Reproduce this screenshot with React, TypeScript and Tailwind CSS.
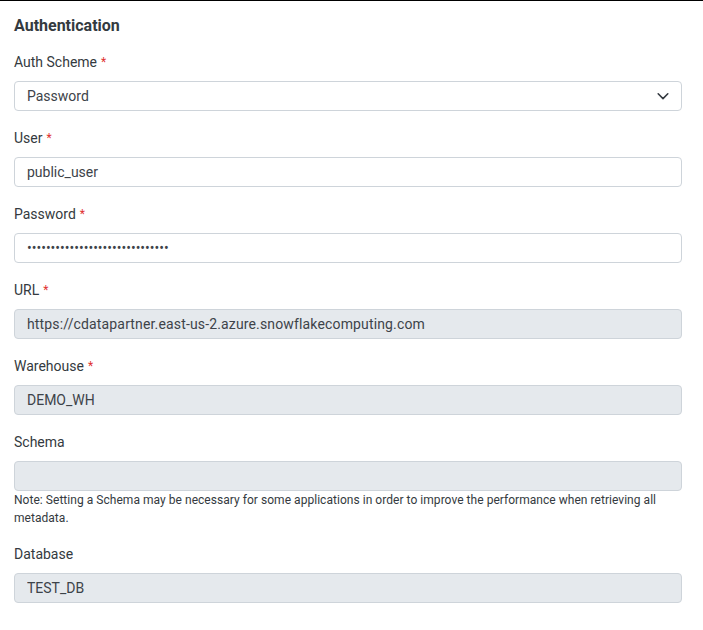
import React from "react";

const Req = () => <span className="text-[#e03131] text-[12px] leading-[0] ml-[4px] relative top-[-1px]">*</span>;

function Field({ label, required, children }: { label: string; required?: boolean; children: React.ReactNode }) {
  return (
    <div className="flex flex-col">
      <div className="text-[14px] leading-[20px] h-[20px] text-[#343a40] mb-[9px]">
        {label}
        {required && <Req />}
      </div>
      {children}
    </div>
  );
}

const inputBase =
  "w-full h-[30px] rounded-[4px] border border-[#ced4da] px-[12px] text-[14px] text-[#3d4349] outline-none";

export default function App() {
  return (
    <div className="w-[703px] h-[630px] bg-white border-t border-black" style={{ fontFamily: "Roboto, 'Liberation Sans', sans-serif" }}>
      <div className="pl-[14px] pr-[21px] pt-[13px] flex flex-col">
        <div className="text-[16px] leading-[24px] font-bold text-[#343a40] mb-[14px]">Authentication</div>
        <div className="flex flex-col gap-[17px]">
          <Field label="Auth Scheme" required>
            <div className={inputBase + " bg-white flex items-center justify-between"}>
              <span>Password</span>
              <svg width="14" height="14" viewBox="0 0 16 16" className="mr-[-1px]">
                <path d="M2.5 5.5 L8 11 L13.5 5.5" fill="none" stroke="#343a40" strokeWidth="1.8" strokeLinecap="round" strokeLinejoin="round" />
              </svg>
            </div>
          </Field>
          <Field label="User" required>
            <input readOnly className={inputBase + " bg-white"} value="public_user" />
          </Field>
          <Field label="Password" required>
            <input readOnly type="password" className={inputBase + " bg-white"} value="xxxxxxxxxxxxxxxxxxxxxxxxxxxxxx" />
          </Field>
          <Field label="URL" required>
            <input readOnly disabled className={inputBase + " bg-[#e5e9ed] tracking-[0.15px]"} value="https://cdatapartner.east-us-2.azure.snowflakecomputing.com" />
          </Field>
          <Field label="Warehouse" required>
            <input readOnly disabled className={inputBase + " bg-[#e5e9ed]"} value="DEMO_WH" />
          </Field>
          <div className="flex flex-col">
            <Field label="Schema">
              <input readOnly disabled className={inputBase + " bg-[#e5e9ed]"} value="" />
            </Field>
            <div className="text-[12px] leading-[18px] text-[#343a40] tracking-[0.04px]">
              Note: Setting a Schema may be necessary for some applications in order to improve the performance when retrieving all metadata.
            </div>
          </div>
          <Field label="Database">
            <input readOnly disabled className={inputBase + " bg-[#e5e9ed]"} value="TEST_DB" />
          </Field>
        </div>
      </div>
    </div>
  );
}
